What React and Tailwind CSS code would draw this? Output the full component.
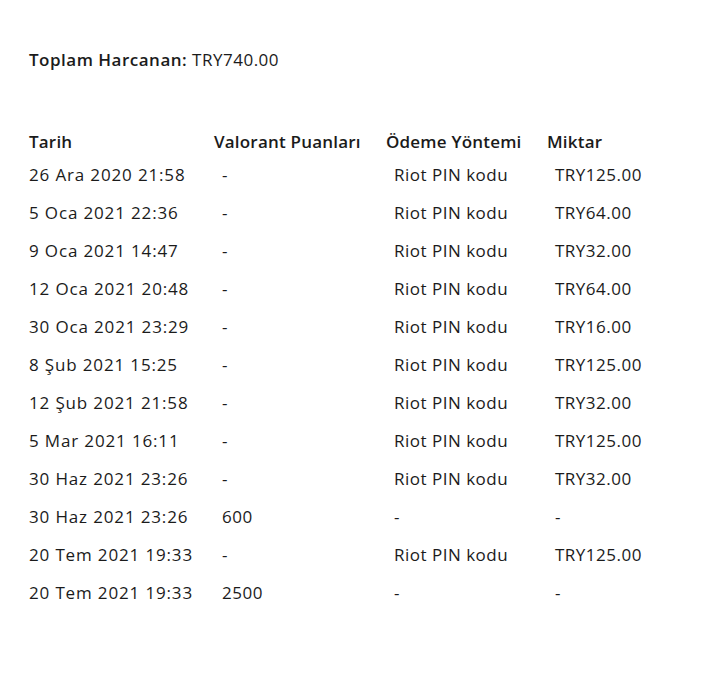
import React from "react";

const rows = [
  ["26 Ara 2020 21:58", "-", "Riot PIN kodu", "TRY125.00"],
  ["5 Oca 2021 22:36", "-", "Riot PIN kodu", "TRY64.00"],
  ["9 Oca 2021 14:47", "-", "Riot PIN kodu", "TRY32.00"],
  ["12 Oca 2021 20:48", "-", "Riot PIN kodu", "TRY64.00"],
  ["30 Oca 2021 23:29", "-", "Riot PIN kodu", "TRY16.00"],
  ["8 Şub 2021 15:25", "-", "Riot PIN kodu", "TRY125.00"],
  ["12 Şub 2021 21:58", "-", "Riot PIN kodu", "TRY32.00"],
  ["5 Mar 2021 16:11", "-", "Riot PIN kodu", "TRY125.00"],
  ["30 Haz 2021 23:26", "-", "Riot PIN kodu", "TRY32.00"],
  ["30 Haz 2021 23:26", "600", "-", "-"],
  ["20 Tem 2021 19:33", "-", "Riot PIN kodu", "TRY125.00"],
  ["20 Tem 2021 19:33", "2500", "-", "-"],
];

const App = () => {
  return (
    <div className="bg-white min-h-screen w-[718px] h-[681px] text-[#1b1b1b] font-['Open_Sans',sans-serif] text-[17px] tracking-[0.5px] px-[29px] pt-[48px]">
      <p className="leading-6">
        <span className="font-semibold">Toplam Harcanan:</span> TRY740.00
      </p>

      <div className="mt-[56px]">
        <div className="grid grid-cols-[185px_172px_161px_1fr] h-[28px] items-center font-semibold tracking-[0.2px]">
          <div>Tarih</div>
          <div>Valorant Puanları</div>
          <div>Ödeme Yöntemi</div>
          <div>Miktar</div>
        </div>
        {rows.map((row, i) => (
          <div
            key={i}
            className="grid grid-cols-[185px_172px_161px_1fr] h-[38px] items-center"
          >
            <div className="tracking-[0.85px]">{row[0]}</div>
            <div className="pl-2">{row[1]}</div>
            <div className="pl-2">{row[2]}</div>
            <div className="pl-2">{row[3]}</div>
          </div>
        ))}
      </div>
    </div>
  );
};

export default App;
